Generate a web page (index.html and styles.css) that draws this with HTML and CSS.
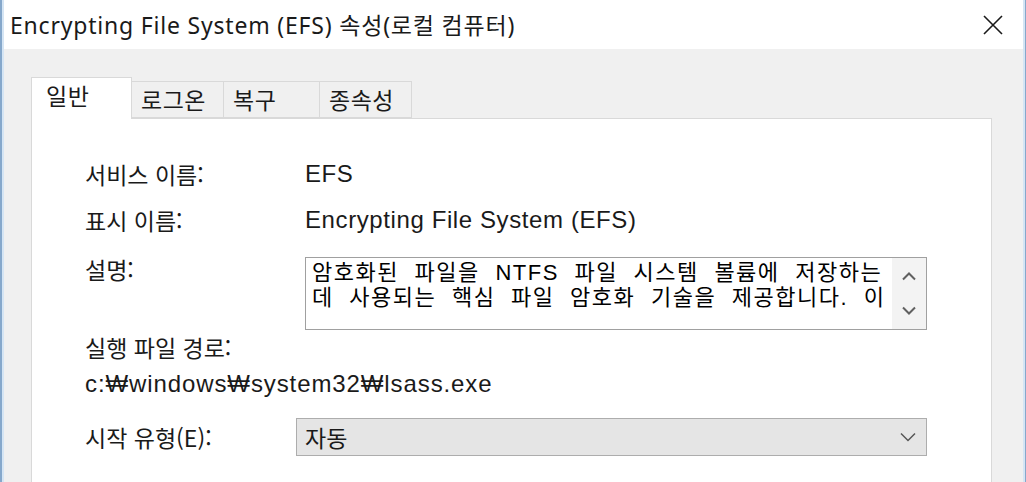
FILE: index.html
```html
<!DOCTYPE html>
<html lang="ko">
<head>
<meta charset="utf-8">
<title>EFS 속성</title>
<link rel="stylesheet" href="styles.css">
</head>
<body>
<div class="window">
  <div class="frame">
    <div class="titlebar">
      <div class="title">Encrypting File System (EFS) 속성(로컬 컴퓨터)</div>
      <div class="close">
        <svg width="20" height="20" viewBox="0 0 20 20"><path d="M1 1 L19 19 M19 1 L1 19" stroke="#1a1a1a" stroke-width="1.6" fill="none"/></svg>
      </div>
    </div>
    <div class="client">
      <div class="tabs">
        <div class="tab active w1">일반</div>
        <div class="tab w2">로그온</div>
        <div class="tab w3">복구</div>
        <div class="tab w4">종속성</div>
      </div>
      <div class="panel">
        <div class="row r1"><div class="label">서비스 이름:</div><div class="value latin">EFS</div></div>
        <div class="row r2"><div class="label">표시 이름:</div><div class="value latin">Encrypting File System (EFS)</div></div>
        <div class="row r3">
          <div class="label">설명:</div>
          <div class="desc">
            <div class="desc-text"><div>암호화된 파일을 NTFS 파일 시스템 볼륨에 저장하는</div><div>데 사용되는 핵심 파일 암호화 기술을 제공합니다. 이</div></div>
            <div class="desc-scroll">
              <svg width="16" height="10" viewBox="0 0 16 10"><path d="M2 8.5 L8 2.5 L14 8.5" stroke="#606060" stroke-width="2" fill="none"/></svg>
              <svg width="16" height="10" viewBox="0 0 16 10"><path d="M2 1.5 L8 7.5 L14 1.5" stroke="#606060" stroke-width="2" fill="none"/></svg>
            </div>
          </div>
        </div>
        <div class="row r4"><div class="label">실행 파일 경로:</div></div>
        <div class="row r5"><div class="path latin">c:₩windows₩system32₩lsass.exe</div></div>
        <div class="row r6">
          <div class="label short">시작 유형(E):</div>
          <div class="combo">
            <span class="combo-text">자동</span>
            <svg width="16" height="10" viewBox="0 0 16 10"><path d="M1 1.5 L8 8.5 L15 1.5" stroke="#555" stroke-width="1.5" fill="none"/></svg>
          </div>
        </div>
      </div>
    </div>
  </div>
</div>
</body>
</html>
```

FILE: styles.css
```css
html, body {
  margin: 0;
  padding: 0;
  width: 1026px;
  height: 482px;
  overflow: hidden;
  background: #f0f0f0;
}

.window {
  height: 482px;
  border-left: 2px solid #86a8cb;
  border-right: 1px solid #86a8cb;
  box-sizing: border-box;
}

.frame {
  height: 100%;
  border-left: 2px solid #d5e5f4;
  border-right: 2px solid #d5e5f4;
  box-sizing: border-box;
  display: flex;
  flex-direction: column;
}

.titlebar {
  height: 49px;
  background: #ffffff;
  display: flex;
  align-items: center;
  justify-content: space-between;
  padding-left: 6px;
  padding-right: 20px;
  flex: none;
}

.title {
  font-family: "Noto Sans", "Noto Sans CJK KR", sans-serif;
  font-size: 23px;
  letter-spacing: 0.8px;
  color: #1a1a1a;
  padding-bottom: 2px;
}

.close {
  display: flex;
  padding-top: 1px;
}

.client {
  flex: 1;
  background: #f0f0f0;
  padding: 28px 31px 0 27px;
  display: flex;
  flex-direction: column;
}

.tabs {
  display: flex;
  align-items: flex-end;
  height: 41px;
  position: relative;
  z-index: 1;
  font-family: "Noto Sans CJK KR", sans-serif;
  font-size: 23px;
  letter-spacing: 0.5px;
  color: #1a1a1a;
}

.tab {
  height: 37px;
  box-sizing: border-box;
  border: 1px solid #d9d9d9;
  border-left: none;
  background: #f0f0f0;
  display: flex;
  align-items: center;
  padding-left: 9px;
  line-height: 1;
}

.tab.active {
  height: 42px;
  margin-bottom: -1px;
  background: #ffffff;
  border-left: 1px solid #d9d9d9;
  border-bottom: none;
  padding-left: 14px;
  padding-bottom: 7px;
}

.w1 { width: 101px; }
.w2 { width: 92px; }
.w3 { width: 96px; }
.w4 { width: 92px; }

.panel {
  flex: 1;
  background: #ffffff;
  border: 1px solid #d9d9d9;
  border-bottom: none;
  padding: 40px 0 0 53px;
  font-family: "Liberation Sans", "Noto Sans CJK KR", sans-serif;
  font-size: 23px;
  color: #1a1a1a;
  display: flex;
  flex-direction: column;
}

.row {
  display: flex;
  line-height: 30px;
}

.label {
  width: 220px;
  flex: none;
  font-family: "Noto Sans CJK KR", sans-serif;
}

.label.short { width: 211px; }

.latin {
  font-size: 24px;
  letter-spacing: 0.6px;
}

.r2 { margin-top: 16px; }
.r3 { margin-top: 19px; align-items: flex-start; }
.r4 { margin-top: 2px; }
.r5 { margin-top: 7px; }
.r6 { margin-top: 19px; align-items: center; }

.desc {
  margin-top: 3px;
  width: 622px;
  height: 73px;
  box-sizing: border-box;
  border: 1px solid #a0a0a0;
  display: flex;
  background: #ffffff;
}

.desc-text {
  flex: 1;
  padding: 2px 0 0 6px;
  font-family: "Liberation Sans", "Noto Sans CJK KR", sans-serif;
  font-size: 22px;
  letter-spacing: 1.5px;
  line-height: 25px;
  color: #000;
  word-spacing: 8px;
  white-space: nowrap;
}

.desc-scroll {
  width: 34px;
  background: #f3f3f3;
  display: flex;
  flex-direction: column;
  align-items: center;
  padding-top: 13px;
  gap: 25px;
}

.desc-scroll svg { display: block; }

.path {
  font-family: "Liberation Sans", "DejaVu Sans", sans-serif;
  letter-spacing: 0.9px;
}

.combo {
  width: 631px;
  height: 38px;
  box-sizing: border-box;
  border: 1px solid #adadad;
  background: #e5e5e5;
  display: flex;
  align-items: center;
  justify-content: space-between;
  padding: 0 10px 0 8px;
}

.combo-text {
  font-family: "Noto Sans CJK KR", sans-serif;
  font-size: 23px;
}

.combo svg { display: block; }
```
